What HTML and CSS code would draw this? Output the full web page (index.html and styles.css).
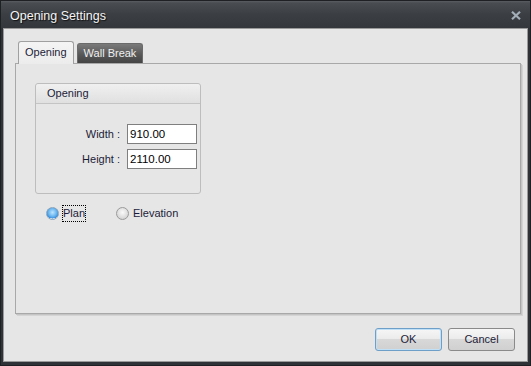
FILE: index.html
```html
<!DOCTYPE html>
<html>
<head>
<meta charset="utf-8">
<link rel="stylesheet" href="styles.css">
</head>
<body>
<div class="window">
  <div class="titlebar">
    <span class="title">Opening Settings</span>
    <svg class="close" width="10" height="9" viewBox="0 0 10 9"><path d="M1 0.8 L9 8.2 M9 0.8 L1 8.2" stroke="#a3adb8" stroke-width="2.2" fill="none"/></svg>
  </div>
  <div class="client">
    <div class="tabs">
      <div class="tab active">Opening</div>
      <div class="tab dark">Wall Break</div>
    </div>
    <div class="panel">
      <div class="group">
        <div class="group-head">Opening</div>
        <div class="group-body">
          <div class="row"><span class="label">Width :</span><span class="input">910.00</span></div>
          <div class="row"><span class="label">Height :</span><span class="input">2110.00</span></div>
        </div>
      </div>
      <div class="radios">
        <div class="radio"><span class="dot on"></span><span class="rtext focus">Plan</span></div>
        <div class="radio"><span class="dot"></span><span class="rtext">Elevation</span></div>
      </div>
    </div>
    <div class="buttons">
      <div class="btn default">OK</div>
      <div class="btn">Cancel</div>
    </div>
  </div>
</div>
</body>
</html>
```
FILE: styles.css
```css
html, body { margin: 0; padding: 0; }
body { width: 531px; height: 366px; overflow: hidden; font-family: "Liberation Sans", Arial, sans-serif; font-size: 11px; color: #1c1c38; }
.window { width: 531px; height: 366px; background: #2f3236; display: flex; flex-direction: column; box-sizing: border-box; border: 1px solid #1e2023; }
.titlebar { height: 27px; flex: none; display: flex; align-items: center; justify-content: space-between; padding: 0 9px 0 9px; background: linear-gradient(#5a5e63 0, #494c51 2px, #3b3e43 50%, #34373b 100%); }
.title { color: #f4f4f4; font-size: 12.5px; text-shadow: 1px 1px 1px #111; padding-top: 2px; }
.close { margin-top: 1px; }
.client { flex: 1; margin: 0 2px 3px 2px; background: #e6e6e6; border: 1px solid #9a9a9a; display: flex; flex-direction: column; padding: 13px 6px 0 11px; }
.tabs { display: flex; align-items: flex-end; padding-left: 3px; gap: 3px; height: 21px; position: relative; z-index: 1; }
.tab { padding: 0 7px; height: 19px; line-height: 19px; border: 1px solid #a0a0a0; border-bottom: none; border-radius: 3px 3px 0 0; }
.tab.active { line-height: 20px; background: linear-gradient(#f4f4f4, #ececec); color: #1c1c38; margin-bottom: -1px; height: 22px; padding: 0 6px; }
.tab.dark { background: linear-gradient(#7a7a7a, #555 60%, #444); color: #f0f0f0; border-color: #6a6a6a; padding: 0 6px; }
.panel { height: 251px; border: 1px solid #a8a8a8; box-shadow: 1px 1px 0 #c4c4c4, 2px 2px 0 #d4d4d4; background: #e6e6e6; padding: 19px 0 0 19px; box-sizing: border-box; }
.group { width: 166px; height: 111px; box-sizing: border-box; border: 1px solid #bdbdbd; border-radius: 3px; display: flex; flex-direction: column; }
.group-head { height: 19px; line-height: 19px; padding-left: 11px; background: linear-gradient(#f0f0f0, #e0e0e0); border-bottom: 1px solid #c4c4c4; border-radius: 3px 3px 0 0; }
.group-body { padding-top: 20px; display: flex; flex-direction: column; gap: 6px; }
.row { display: flex; align-items: center; height: 20px; }
.row + .row { margin-top: -1px; }
.label { width: 91px; text-align: right; padding-right: 7px; box-sizing: border-box; }
.input { width: 70px; height: 20px; box-sizing: border-box; border: 1px solid #7f7f7f; background: #fff; line-height: 18px; padding-left: 2px; color: #000; font-size: 11.5px; }
.radios { display: flex; margin-top: 11px; padding-left: 11px; height: 16px; align-items: center; }
.radio { display: flex; align-items: center; }
.radio + .radio { margin-left: 31px; }
.dot { width: 11px; height: 11px; border-radius: 50%; border: 1px solid #9a9a9a; background: radial-gradient(circle at 50% 40%, #fafafa, #c8c8c8); margin-right: 4px; box-sizing: content-box; }
.dot.on { background: radial-gradient(circle at 50% 40%, #bfe4ff 0, #6cb8f0 45%, #3a8edc 70%, #d8e8f4 72%, #e8e8e8 100%); border-color: #8aa4bc; }
.rtext { padding: 1px 0; line-height: 13px; font-size: 11px; }
.rtext.focus { outline: 1px dotted #000; }
.buttons { display: flex; justify-content: flex-end; gap: 6px; margin-top: 14px; padding-right: 6px; }
.btn { width: 67px; height: 23px; box-sizing: border-box; border: 1px solid #8a8a8a; border-radius: 3px; background: linear-gradient(#f6f6f6 0, #ececec 45%, #d8d8d8 50%, #d0d0d0 100%); text-align: center; line-height: 21px; font-size: 11px; }
.btn.default { border-color: #6d9fc8; box-shadow: inset 0 0 0 1px #bfe0f6; }
```
